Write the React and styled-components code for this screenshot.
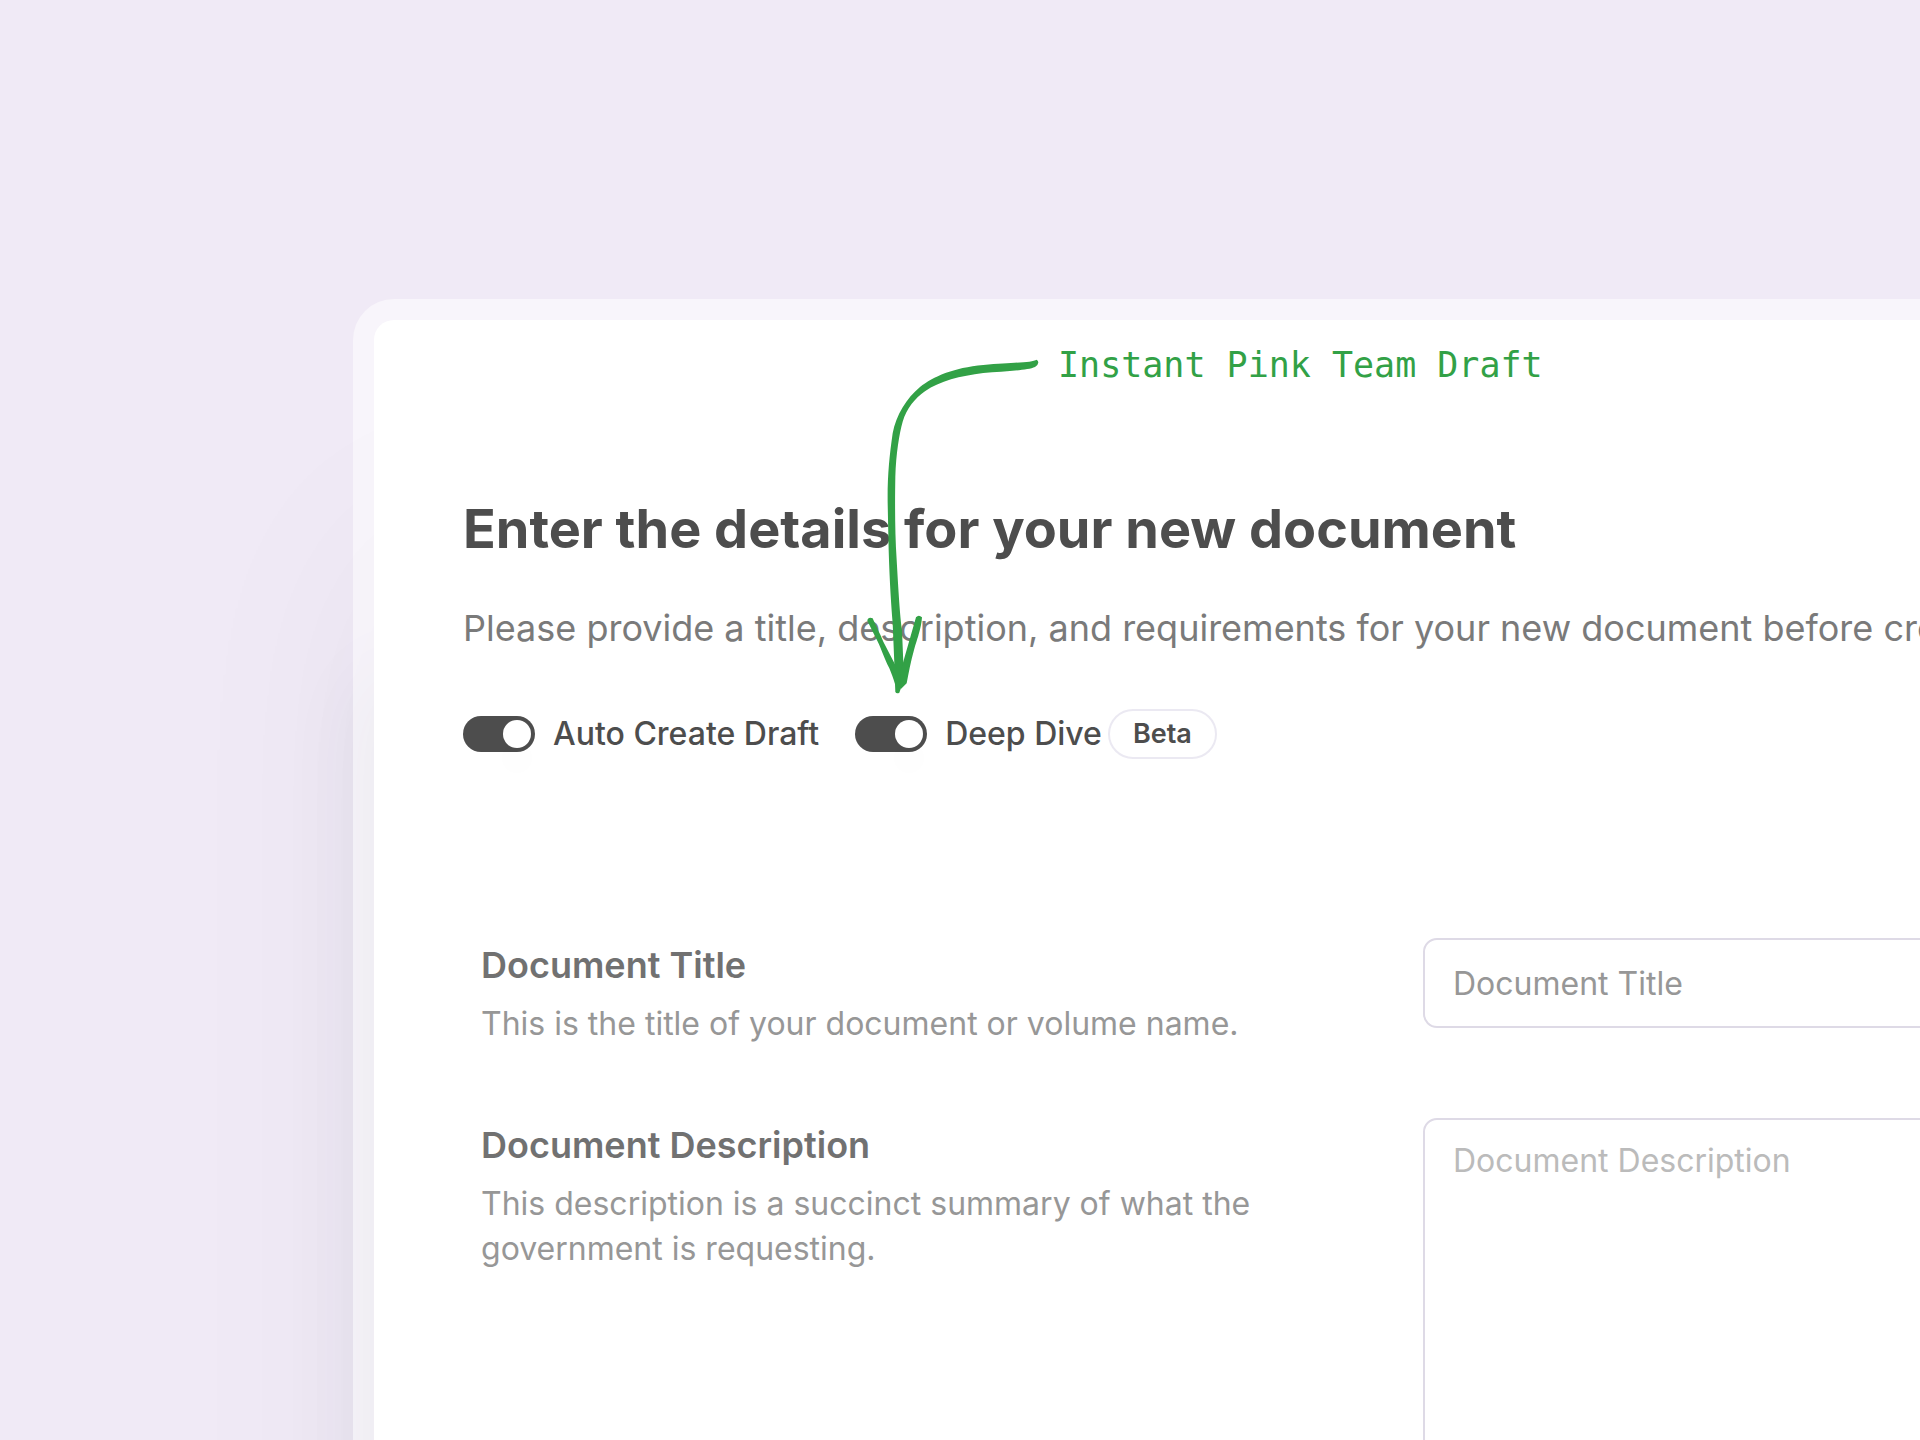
import React, {useState} from "react";
import styled, {createGlobalStyle} from "styled-components";

const GlobalStyle = createGlobalStyle`
  * {
    box-sizing: border-box;
  }
  body {
    margin: 0;
    background-color: #f0eaf6;
    font-family: Inter, "Liberation Sans", sans-serif;
    color: #4d4d4d;
  }
`;

const Page = styled.main`
  min-height: 100vh;
  padding: 320px 0 0 374px;
  overflow: hidden;
  display: flex;
`;

const Panel = styled.section`
  position: relative;
  flex: 1;
  min-width: 0;
  margin-right: -120px;
  padding: 173px 90px 0 89px;
  background-color: white;
  border-top-left-radius: 20px;
  box-shadow:
    0 0 0 21px rgba(255, 255, 255, 0.5),
    0 370px 80px 14px rgba(20, 70, 10, 0.06),
    0 225px 225px 0 rgba(40, 20, 60, 0.05);
`;

const Heading = styled.h1`
  margin: 0;
  font-size: 54px;
  font-weight: 700;
  line-height: 72px;
  white-space: nowrap;
`;

const Intro = styled.p`
  margin: 36px 0 54px 0;
  font-size: 36px;
  line-height: 54px;
  color: #7a7a7a;
  white-space: nowrap;
`;

const SwitchRow = styled.div`
  display: flex;
  align-items: center;
  gap: 36px;
  margin-bottom: 179px;
`;

const SwitchLabel = styled.label`
  display: flex;
  align-items: center;
  gap: 18px;
  font-size: 32px;
  font-weight: 500;
  line-height: 50px;
`;

const SwitchInput = styled.input`
  appearance: none;
  width: 72px;
  height: 36px;
  margin: 0;
  padding: 4px;
  border-radius: 18px;
  background-color: ${props => props.checked ? "#4d4d4d" : "#dedce6"};
  display: flex;
  justify-content: ${props => props.checked ? "flex-end" : "flex-start"};
  cursor: pointer;
  &::before {
    content: "";
    width: 28px;
    height: 28px;
    border-radius: 50%;
    background-color: white;
    box-shadow: 0 24px 36px rgba(0, 0, 0, 0.02);
  }
`;

const BetaGroup = styled.div`
  display: flex;
  align-items: center;
  gap: 6px;
`;

const Badge = styled.span`
  padding: 0 23px;
  border: 2px solid #ebe9f2;
  border-radius: 25px;
  font-size: 27px;
  font-weight: 600;
  line-height: 46px;
`;

const Form = styled.form`
  display: flex;
  flex-direction: column;
  gap: 72px;
  padding-left: 18px;
`;

const FieldRow = styled.div`
  display: grid;
  grid-template-columns: 870px 1fr;
  column-gap: 72px;
  align-items: start;
`;

const FieldLabel = styled.label`
  display: block;
  margin-bottom: 9px;
  font-size: 36px;
  font-weight: 600;
  line-height: 54px;
  color: #717171;
`;

const FieldHint = styled.p`
  margin: 0;
  font-size: 32px;
  line-height: 45px;
  color: #979797;
`;

const TextInput = styled.input`
  width: 100%;
  height: 90px;
  padding: 0 28px;
  border: 2px solid #dedae6;
  border-radius: 14px;
  background-color: white;
  font-family: inherit;
  font-size: 32px;
  color: #4d4d4d;
  &::placeholder {
    color: #979797;
    opacity: 1;
  }
`;

const TextArea = styled.textarea`
  display: block;
  width: 100%;
  height: 405px;
  padding: 18px 28px;
  border: 2px solid #dedae6;
  border-radius: 14px;
  background-color: white;
  font-family: inherit;
  font-size: 32px;
  line-height: 45px;
  color: #4d4d4d;
  resize: none;
  &::placeholder {
    color: #bbbbbb;
    opacity: 1;
  }
`;

// Sits over the heading and points at the Deep Dive switch
const Callout = styled.div`
  position: absolute;
  top: 24px;
  left: 490px;
  display: flex;
  align-items: flex-start;
  gap: 16px;
  pointer-events: none;
`;

const CalloutText = styled.span`
  font-family: Excalifont, Virgil, "DejaVu Sans Mono", monospace;
  font-size: 35px;
  line-height: 42px;
  color: #32a146;
  white-space: nowrap;
`;

const Arrow = () => {
  return (
    <svg width="178" height="352" viewBox="72 42 534 1056" fill="#32a146" aria-hidden="true">
      <path d="M590 89C575 98 520 97 430 105C340 113 280 140 240 171C200 204 168 255 158 310C148 380 142 440 143 520L146 660C149 760 154 830 158 880L163 1000L170 1060L192 1050L186 900C180 860 175 780 170 690C164 600 165 500 166 440C168 370 178 310 188 275C200 235 225 205 255 184C300 152 360 138 430 129C490 124 560 122 585 111Q602 98 590 89Z" />
      <path d="M82 872Q84 860 98 865C108 890 120 910 130 935L166 1005L188 1060L178 1088Q170 1092 166 1086L165 1062C160 1045 154 1030 148 1015C130 980 122 950 108 925Z" />
      <path d="M228 862Q236 852 246 862C244 895 232 925 222 960C212 995 206 1030 200 1060L182 1078L180 1030C190 995 200 960 210 925Z" />
    </svg>
  );
}

const Switch = (props) => {
  const [on, setOn] = useState(true);
  return (
    <SwitchLabel>
      <SwitchInput type="checkbox" role="switch" checked={on} onChange={() => setOn(!on)} />
      {props.children}
    </SwitchLabel>
  )
}

const App = () => {
  return (
    <>
      <GlobalStyle />
      <Page>
        <Panel>
          <Heading>Enter the details for your new document</Heading>
          <Intro>
            Please provide a title, description, and requirements for your new document before creating
          </Intro>
          <SwitchRow>
            <Switch>Auto Create Draft</Switch>
            <BetaGroup>
              <Switch>Deep Dive</Switch>
              <Badge>Beta</Badge>
            </BetaGroup>
          </SwitchRow>
          <Form>
            <FieldRow>
              <div>
                <FieldLabel htmlFor="title">Document Title</FieldLabel>
                <FieldHint>This is the title of your document or volume name.</FieldHint>
              </div>
              <TextInput id="title" placeholder="Document Title" />
            </FieldRow>
            <FieldRow>
              <div>
                <FieldLabel htmlFor="description">Document Description</FieldLabel>
                <FieldHint>
                  This description is a succinct summary of what the government is requesting.
                </FieldHint>
              </div>
              <TextArea id="description" placeholder="Document Description" />
            </FieldRow>
          </Form>
          <Callout>
            <Arrow />
            <CalloutText>Instant Pink Team Draft</CalloutText>
          </Callout>
        </Panel>
      </Page>
    </>
  );
}

export default App;
